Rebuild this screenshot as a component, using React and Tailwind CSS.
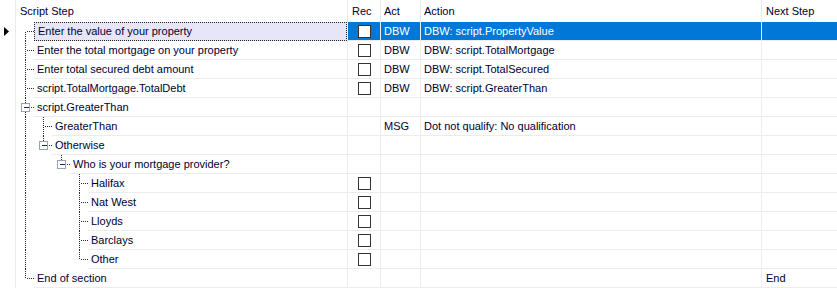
import React from 'react';

const ROWS = [
    { level: 0, step: 'Enter the value of your property', rec: true, act: 'DBW', action: 'DBW: script.PropertyValue', selected: true },
    { level: 0, step: 'Enter the total mortgage on your property', rec: true, act: 'DBW', action: 'DBW: script.TotalMortgage' },
    { level: 0, step: 'Enter total secured debt amount', rec: true, act: 'DBW', action: 'DBW: script.TotalSecured' },
    { level: 0, step: 'script.TotalMortgage.TotalDebt', rec: true, act: 'DBW', action: 'DBW: script.GreaterThan' },
    { level: 0, step: 'script.GreaterThan' },
    { level: 1, step: 'GreaterThan', act: 'MSG', action: 'Dot not qualify: No qualification' },
    { level: 1, step: 'Otherwise' },
    { level: 2, step: 'Who is your mortgage provider?' },
    { level: 3, step: 'Halifax', rec: true },
    { level: 3, step: 'Nat West', rec: true },
    { level: 3, step: 'Lloyds', rec: true },
    { level: 3, step: 'Barclays', rec: true },
    { level: 3, step: 'Other', rec: true },
    { level: 0, step: 'End of section', next: 'End' },
];

// work out tree connectors for each row
const hasNextSibling = (i) => {
    const lvl = ROWS[i].level;
    for (let j = i + 1; j < ROWS.length; j++) {
        if (ROWS[j].level < lvl) return false;
        if (ROWS[j].level === lvl) return true;
    }
    return false;
};

const treeInfo = ROWS.map((r, i) => {
    const guides = [];
    for (let l = 0; l < r.level; l++) {
        let anc = -1;
        for (let j = i - 1; j >= 0; j--) {
            if (ROWS[j].level === l) { anc = j; break; }
        }
        if (anc >= 0 && hasNextSibling(anc)) guides.push(l);
    }
    const hasChildren = i + 1 < ROWS.length && ROWS[i + 1].level > r.level;
    return { guides, hasChildren, next: hasNextSibling(i), first: i === 0 };
});

const DOT = '#2a2a2a';

const TreeLines = ({ level, info }) => {
    const w = 18 + level * 18;
    const x = 9 + level * 18 + 0.5;
    const box = info.hasChildren;
    return (
        <svg width={w} height={19} className="shrink-0" shapeRendering="crispEdges">
            {info.guides.map(l => (
                <line key={l} x1={9 + l * 18 + 0.5} x2={9 + l * 18 + 0.5} y1={0} y2={19} stroke={DOT} strokeDasharray="1 1" />
            ))}
            {!info.first && <line x1={x} x2={x} y1={0} y2={box ? 5 : 9} stroke={DOT} strokeDasharray="1 1" />}
            {info.next && <line x1={x} x2={x} y1={box ? 14 : 10} y2={19} stroke={DOT} strokeDasharray="1 1" />}
            <line x1={box ? x + 5 : x + 1} x2={x + 8.5} y1={9.5} y2={9.5} stroke={DOT} strokeDasharray="1 1" />
            {box && (
                <g>
                    <rect x={x - 4} y={5.5} width={8} height={8} fill="#fff" stroke="#9aa3b3" />
                    <line x1={x - 2} x2={x + 3} y1={9.5} y2={9.5} stroke="#1f2a44" />
                </g>
            )}
        </svg>
    );
};

const Check = () => (
    <div className="w-[13px] h-[13px] border border-[#333333] bg-white" />
);

export default function App() {
    return (
        <div className="w-[837px] h-[288px] bg-white overflow-hidden text-[11px] text-[#000030] select-none" style={{ fontFamily: '"Liberation Sans", Arial, sans-serif' }}>
            {/* header */}
            <div className="flex h-[22px]">
                <div className="w-[16px] border-r border-[#ececec]" />
                <div className="w-[332px] border-r border-[#ececec] pl-[4px] flex items-center">Script Step</div>
                <div className="w-[33px] border-r border-[#ececec] pl-[4px] flex items-center">Rec</div>
                <div className="w-[40px] border-r border-[#ececec] pl-[3px] flex items-center">Act</div>
                <div className="w-[341px] border-r border-[#ececec] pl-[3px] flex items-center">Action</div>
                <div className="flex-1 pl-[4px] flex items-center">Next Step</div>
            </div>

            {ROWS.map((r, i) => {
                const sel = r.selected;
                const cellSel = sel ? 'bg-[#0078d7] text-white' : '';
                return (
                    <div key={i} className="flex h-[19px]">
                        <div className="w-[16px] border-r border-[#ececec] flex items-center justify-start pl-[4px]">
                            {sel && (
                                <svg width="5" height="9" viewBox="0 0 5 9">
                                    <path d="M0 0 L5 4.5 L0 9 Z" fill="#000" />
                                </svg>
                            )}
                        </div>
                        <div className="w-[332px] border-r border-[#ececec] flex">
                            <TreeLines level={r.level} info={treeInfo[i]} />
                            <div className={`flex-1 min-w-0 flex items-center pl-[3px] whitespace-nowrap border-b ${sel ? 'bg-[#e6e6f8] border border-dotted border-[#222]' : 'border-[#ececec]'}`}>
                                {r.step}
                            </div>
                        </div>
                        <div className={`w-[33px] border-r border-b border-[#ececec] flex items-center pl-[10px] ${cellSel}`}>
                            {r.rec && <Check />}
                        </div>
                        <div className={`w-[40px] border-r border-b border-[#ececec] flex items-center pl-[3px] ${cellSel}`}>
                            {r.act}
                        </div>
                        <div className={`w-[341px] border-r border-b border-[#ececec] flex items-center pl-[3px] whitespace-nowrap ${cellSel}`}>
                            {r.action}
                        </div>
                        <div className={`flex-1 border-b border-[#ececec] flex items-center pl-[4px] ${cellSel}`}>
                            {r.next}
                        </div>
                    </div>
                );
            })}
        </div>
    );
}
